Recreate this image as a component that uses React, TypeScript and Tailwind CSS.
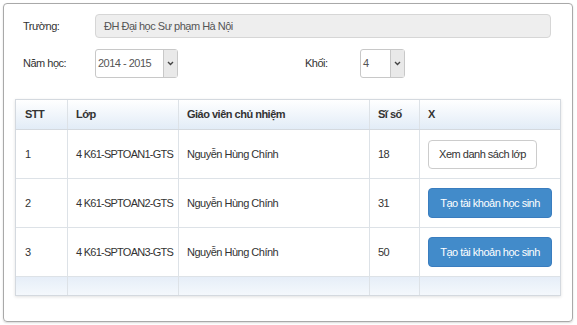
import React from "react";

const rows = [
  { stt: 1, lop: "4 K61-SPTOAN1-GTS", gv: "Nguyễn Hùng Chính", siso: 18, view: true },
  { stt: 2, lop: "4 K61-SPTOAN2-GTS", gv: "Nguyễn Hùng Chính", siso: 31, view: false },
  { stt: 3, lop: "4 K61-SPTOAN3-GTS", gv: "Nguyễn Hùng Chính", siso: 50, view: false },
];

function Select({ value, width }: { value: string; width: string }) {
  return (
    <div className={`flex h-[29px] ${width} rounded-[3px] border border-[#c8c8c8] bg-white`}>
      <div className="flex flex-1 items-center pl-[2px] text-[#555]">{value}</div>
      <div className="flex w-[14px] items-center justify-center border-l border-[#c8c8c8] bg-[#e9e9e9]">
        <svg width="7" height="5" viewBox="0 0 7 5">
          <path d="M1 1 L3.5 3.5 L6 1" fill="none" stroke="#444" strokeWidth="1.4" />
        </svg>
      </div>
    </div>
  );
}

export default function App() {
  return (
    <div
      className="h-[325px] w-[577px] bg-white pl-[3px] pt-[3px] text-[11px] tracking-[-0.5px] text-[#333]"
      style={{ fontFamily: '"Liberation Sans", Arial, sans-serif' }}
    >
      <div className="h-[319px] w-[570px] rounded-[4px] border border-[#a9a9a9] px-[11px] pt-[10px] shadow-[0_1px_2px_rgba(0,0,0,0.15)]">
        {/* truong */}
        <div className="flex items-center pl-[8px]">
          <div className="w-[72px]">Trường:</div>
          <div className="flex h-[24px] w-[456px] items-center rounded-[4px] border border-[#d6d6d6] bg-[#eeeeee] pl-[8px] text-[#555]">
            ĐH Đại học Sư phạm Hà Nội
          </div>
        </div>
        {/* nam hoc / khoi */}
        <div className="mt-[11px] flex items-center pl-[8px]">
          <div className="w-[72px]">Năm học:</div>
          <Select value="2014 - 2015" width="w-[83px]" />
          <div className="ml-[127px] w-[55px]">Khối:</div>
          <Select value="4" width="w-[45px]" />
        </div>
        {/* table */}
        <div className="mt-[21px] w-[546px] border border-[#d4d9df] shadow-[0_1px_3px_rgba(0,0,0,0.12)]">
          <div className="flex h-[30px] items-center border-b border-[#d4d9df] bg-gradient-to-b from-white to-[#e2ecf7] font-bold">
            <div className="flex h-full w-[52px] items-center border-r border-[#dde2e7] pl-[9px]">STT</div>
            <div className="flex h-full w-[111px] items-center border-r border-[#dde2e7] pl-[8px]">Lớp</div>
            <div className="flex h-full w-[191px] items-center border-r border-[#dde2e7] pl-[8px]">Giáo viên chủ nhiệm</div>
            <div className="flex h-full w-[50px] items-center border-r border-[#dde2e7] pl-[8px]">Sĩ số</div>
            <div className="flex h-full flex-1 items-center pl-[8px]">X</div>
          </div>
          {rows.map((r) => (
            <div key={r.stt} className="flex h-[49px] items-center border-b border-[#dde2e7] bg-white">
              <div className="flex h-full w-[52px] items-center border-r border-[#dde2e7] pl-[9px]">{r.stt}</div>
              <div className="flex h-full w-[111px] items-center whitespace-nowrap border-r border-[#dde2e7] pl-[8px] tracking-[-0.75px]">{r.lop}</div>
              <div className="flex h-full w-[191px] items-center border-r border-[#dde2e7] pl-[8px]">{r.gv}</div>
              <div className="flex h-full w-[50px] items-center border-r border-[#dde2e7] pl-[8px]">{r.siso}</div>
              <div className="flex h-full flex-1 items-center pl-[8px]">
                {r.view ? (
                  <button className="h-[29px] w-[109px] whitespace-nowrap rounded-[4px] border border-[#cccccc] bg-white text-[#333]">
                    Xem danh sách lớp
                  </button>
                ) : (
                  <button className="h-[30px] w-[124px] whitespace-nowrap rounded-[4px] border border-[#3a7dbf] bg-[#428bca] text-white">
                    Tạo tài khoản học sinh
                  </button>
                )}
              </div>
            </div>
          ))}
          <div className="flex h-[18px] bg-gradient-to-b from-[#e6eef8] to-[#f4f8fc]">
            <div className="h-full w-[52px] border-r border-[#dde2e7]" />
            <div className="h-full w-[111px] border-r border-[#dde2e7]" />
            <div className="h-full w-[191px] border-r border-[#dde2e7]" />
            <div className="h-full w-[50px] border-r border-[#dde2e7]" />
            <div className="h-full flex-1" />
          </div>
        </div>
      </div>
    </div>
  );
}
